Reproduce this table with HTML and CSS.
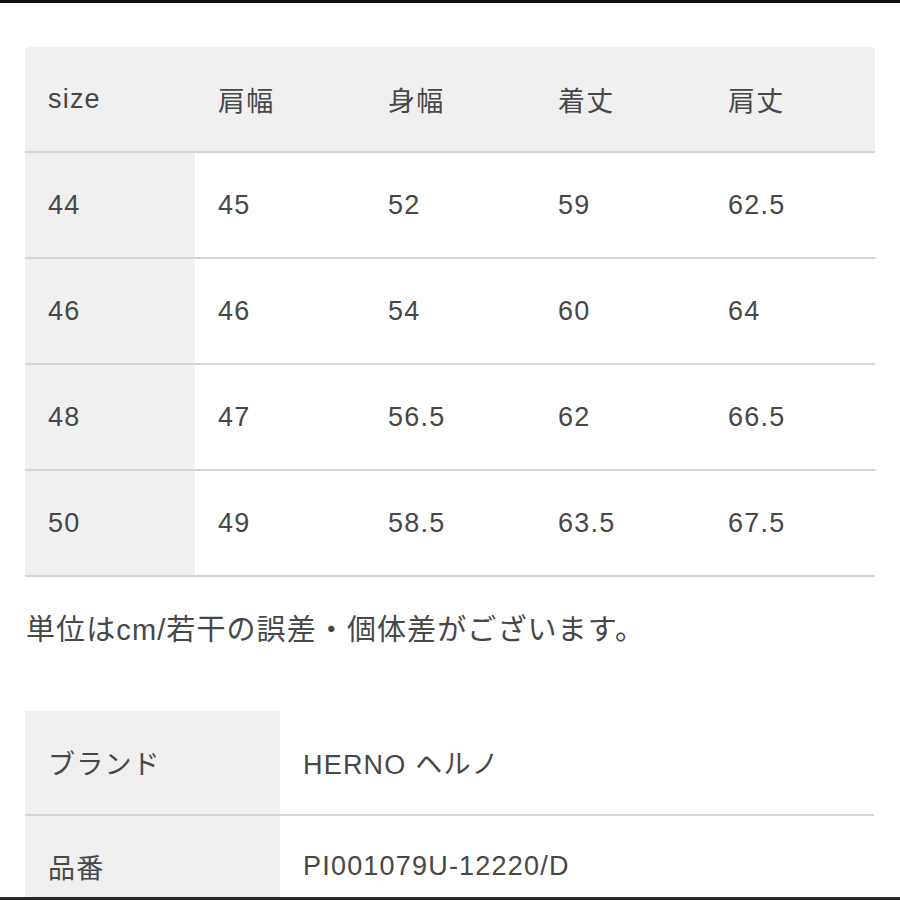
FILE: index.html
```html
<!DOCTYPE html>
<html lang="ja">
<head>
<meta charset="utf-8">
<title>サイズ表</title>
<link rel="stylesheet" href="styles.css">
</head>
<body>
<div class="page">
  <div class="bar-top"></div>
  <main class="content">
    <div class="size-table">
      <div class="row head">
        <div class="cell">size</div>
        <div class="cell">肩幅</div>
        <div class="cell">身幅</div>
        <div class="cell">着丈</div>
        <div class="cell">肩丈</div>
      </div>
      <div class="row">
        <div class="cell key">44</div>
        <div class="cell">45</div>
        <div class="cell">52</div>
        <div class="cell">59</div>
        <div class="cell">62.5</div>
      </div>
      <div class="row">
        <div class="cell key">46</div>
        <div class="cell">46</div>
        <div class="cell">54</div>
        <div class="cell">60</div>
        <div class="cell">64</div>
      </div>
      <div class="row">
        <div class="cell key">48</div>
        <div class="cell">47</div>
        <div class="cell">56.5</div>
        <div class="cell">62</div>
        <div class="cell">66.5</div>
      </div>
      <div class="row">
        <div class="cell key">50</div>
        <div class="cell">49</div>
        <div class="cell">58.5</div>
        <div class="cell">63.5</div>
        <div class="cell">67.5</div>
      </div>
    </div>
    <p class="note">単位はcm/若干の誤差・個体差がございます。</p>
    <div class="info-table">
      <div class="info-row">
        <div class="cell key">ブランド</div>
        <div class="cell">HERNO ヘルノ</div>
      </div>
      <div class="info-row">
        <div class="cell key">品番</div>
        <div class="cell">PI001079U-12220/D</div>
      </div>
    </div>
  </main>
  <div class="bar-bottom"></div>
</div>
</body>
</html>
```
FILE: styles.css
```css
html, body {
  margin: 0;
  padding: 0;
  background: #ffffff;
}

.page {
  height: 900px;
  display: flex;
  flex-direction: column;
  overflow: hidden;
  font-family: "Liberation Sans", "Noto Sans CJK JP", sans-serif;
  color: #474747;
  font-size: 27px;
  letter-spacing: 1.2px;
}

.bar-top {
  height: 3px;
  background: #111111;
  flex: none;
}

.bar-bottom {
  height: 3px;
  background: #2a2a2a;
  flex: none;
}

.content {
  flex: 1;
  overflow: hidden;
  padding: 44px 0 0 25px;
}

.size-table {
  width: 850px;
  border-radius: 4px 4px 0 0;
  overflow: hidden;
}

.row {
  display: grid;
  grid-template-columns: repeat(5, 170px);
  height: 104px;
  border-bottom: 2px solid #d6d6d6;
}

.row.head {
  background: #f0f0f0;
}

.cell {
  display: flex;
  align-items: center;
  padding-left: 23px;
}

.cell.key {
  background: #f0f0f0;
}

.note {
  margin: 33px 0 61px;
  height: 40px;
  line-height: 40px;
  padding-left: 1px;
  font-size: 29px;
  letter-spacing: 1.1px;
  white-space: nowrap;
}

.info-table {
  width: 849px;
}

.info-row {
  display: grid;
  grid-template-columns: 255px 594px;
  height: 103px;
  border-bottom: 2px solid #d6d6d6;
}

.info-row:last-child {
  border-bottom: none;
  height: 100px;
}
```
